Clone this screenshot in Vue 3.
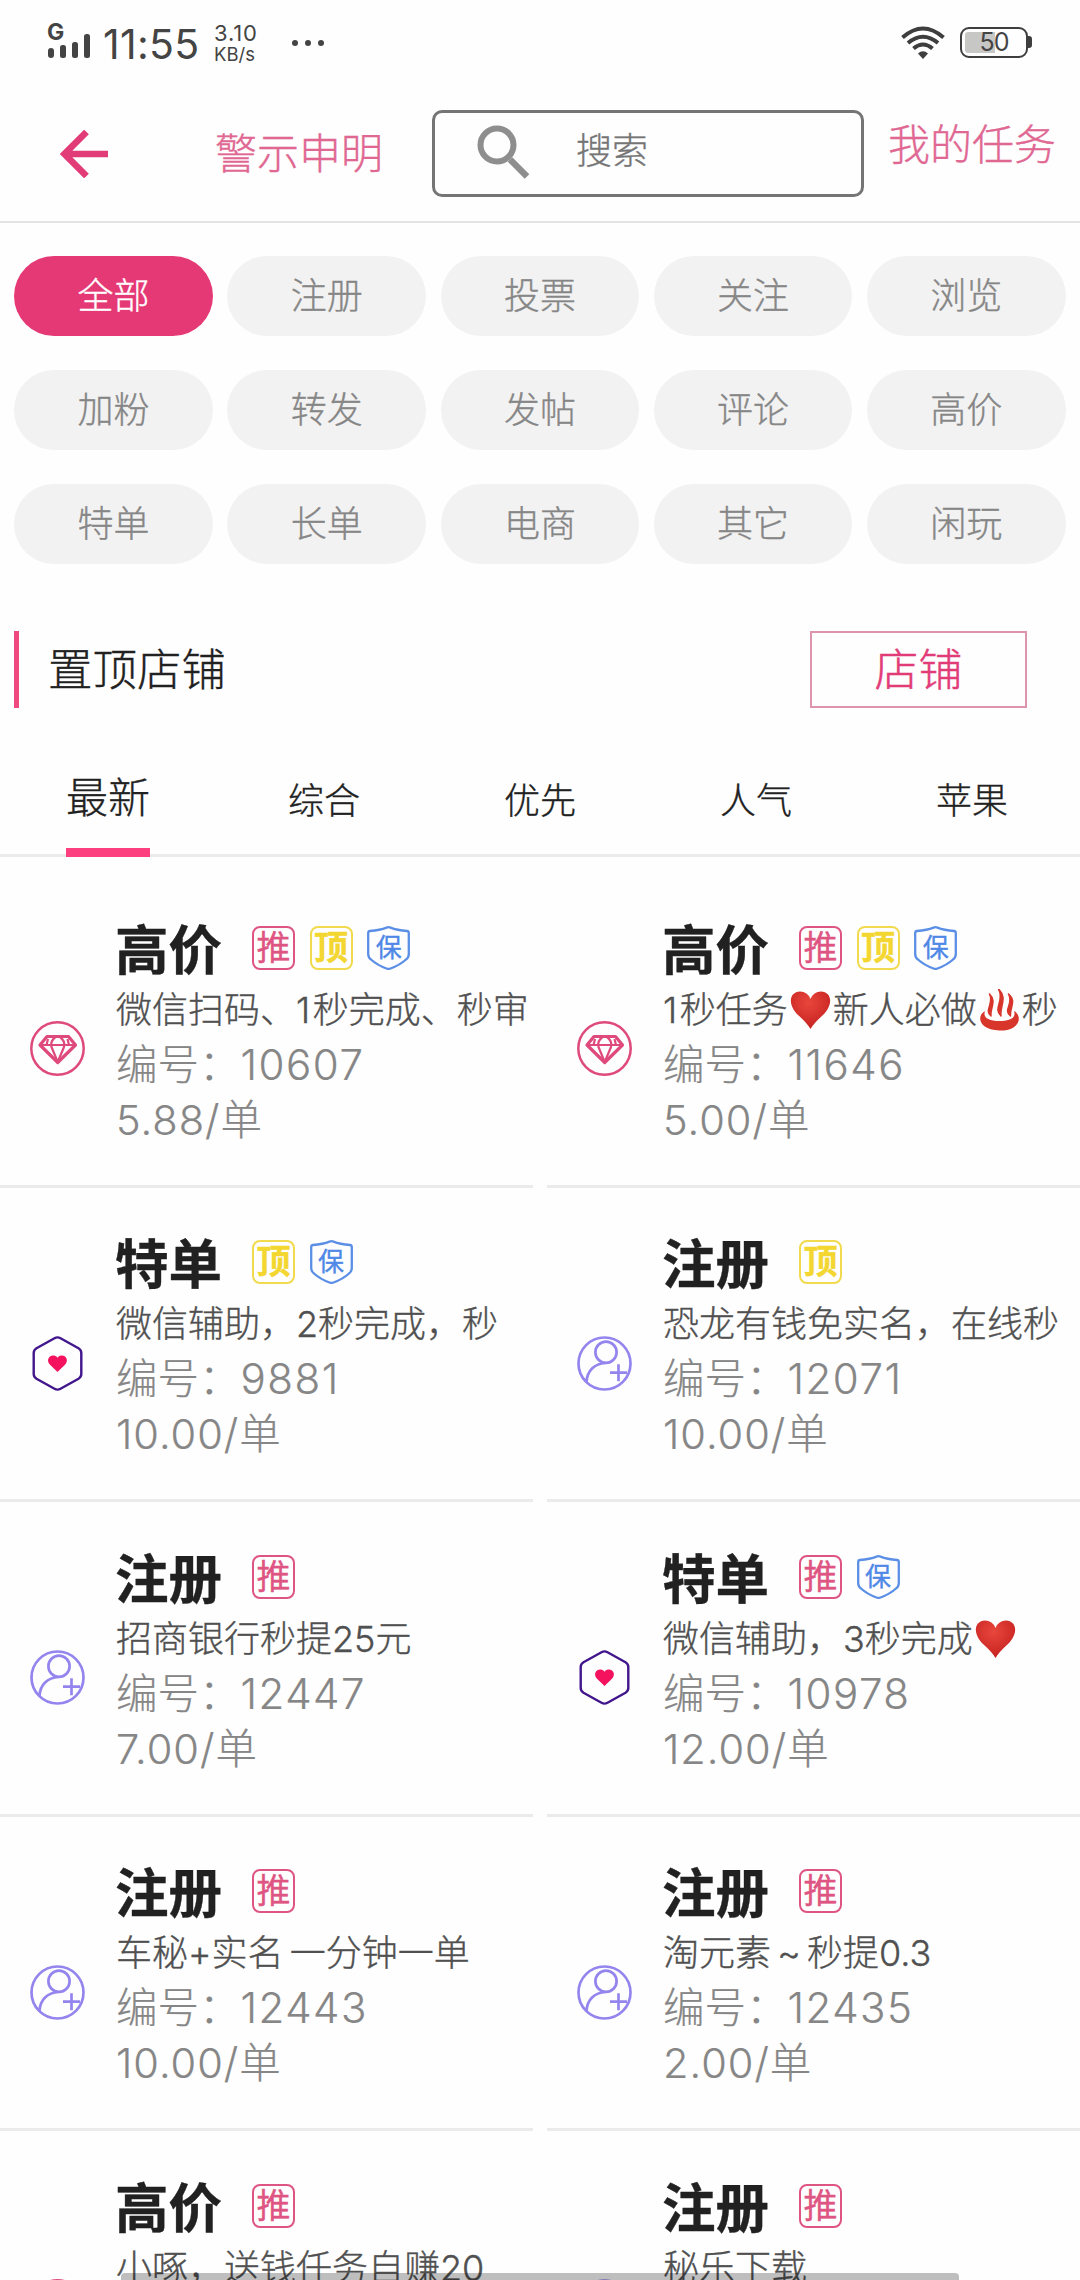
<script setup>
const categories = [
  '全部', '注册', '投票', '关注', '浏览',
  '加粉', '转发', '发帖', '评论', '高价',
  '特单', '长单', '电商', '其它', '闲玩',
]
const tabs = ['最新', '综合', '优先', '人气', '苹果']

const tasks = [
  { icon: 'gem', type: '高价', badges: ['推', '顶', '保'], desc: ['微信扫码、', 'one', '秒完成、秒审'], no: '10607', price: '5.88' },
  { icon: 'gem', type: '高价', badges: ['推', '顶', '保'], desc: ['one', '秒任务', 'heart', '新人必做', 'spring', '秒'], no: '11646', price: '5.00' },
  { icon: 'hex', type: '特单', badges: ['顶', '保'], desc: ['微信辅助，2秒完成，秒'], no: '9881', price: '10.00' },
  { icon: 'user', type: '注册', badges: ['顶'], desc: ['恐龙有钱免实名，在线秒'], no: '12071', price: '10.00' },
  { icon: 'user', type: '注册', badges: ['推'], desc: ['招商银行秒提25元'], no: '12447', price: '7.00' },
  { icon: 'hex', type: '特单', badges: ['推', '保'], desc: ['微信辅助，3秒完成', 'heart'], no: '10978', price: '12.00' },
  { icon: 'user', type: '注册', badges: ['推'], desc: ['车秘+实名 一分钟一单'], no: '12443', price: '10.00' },
  { icon: 'user', type: '注册', badges: ['推'], desc: ['淘元素', 'tilde', '秒提0.3'], no: '12435', price: '2.00' },
  { icon: 'gem', type: '高价', badges: ['推'], desc: ['小啄，送钱任务自赚20'] },
  { icon: 'user', type: '注册', badges: ['推'], desc: ['秘乐下载'] },
]
const badgeClass = { 推: 'push', 顶: 'top', 保: 'safe' }
</script>

<template>
  <div class="screen">
    <div class="status">
      <div class="signal">
        <span class="net">G</span>
        <svg width="42" height="25" viewBox="0 0 42 25" fill="#444">
          <rect x="0" y="15" width="6" height="10" rx="3" />
          <rect x="12" y="12" width="6" height="13" rx="2.5" />
          <rect x="24" y="9" width="6" height="16" rx="2.5" />
          <rect x="36" y="1" width="6" height="24" rx="2.5" />
        </svg>
      </div>
      <span class="clock">11:55</span>
      <div class="speed"><span>3.10</span><span class="unit">KB/s</span></div>
      <div class="dots"><i></i><i></i><i></i></div>
      <svg class="wifi" width="44" height="33" viewBox="0 0 44 33" fill="none" stroke="#3e3e3e" stroke-width="4">
        <path d="M1.500 11.500Q22 -6.500 42.500 11.500" />
        <path d="M7 17Q22 4.500 37 17" />
        <path d="M12.500 22.500Q22 14.500 31.500 22.500" />
        <path d="M17 27.500Q22 23 27 27.500L22 33Z" fill="#3e3e3e" stroke="none" />
      </svg>
      <div class="battery"><span class="charge"></span><span class="level">50</span></div>
      <span class="nub"></span>
    </div>

    <header class="header">
      <svg class="back" width="48" height="48" viewBox="0 0 48 48" fill="none" stroke="#e23c78" stroke-width="6.600">
        <path d="M26.500 2L4.500 24L26.500 46M5 24H48" />
      </svg>
      <a class="link notice">警示申明</a>
      <div class="search">
        <svg width="54" height="54" viewBox="0 0 54 54" fill="none" stroke="#8e8e8e">
          <circle cx="20" cy="20" r="16.500" stroke-width="6" />
          <path d="M33 34.500L50 51.500" stroke-width="6.500" />
        </svg>
        <span>搜索</span>
      </div>
      <a class="link mine">我的任务</a>
    </header>

    <nav class="cats">
      <span v-for="(c, i) in categories" :key="c" class="pill" :class="{ on: i === 0 }">{{ c }}</span>
    </nav>

    <section class="shop">
      <h2>置顶店铺</h2>
      <button class="shop-btn">店铺</button>
    </section>

    <nav class="tabs">
      <span v-for="(t, i) in tabs" :key="t" class="tab" :class="{ on: i === 0 }"><b>{{ t }}</b></span>
    </nav>

    <main class="list">
      <article v-for="(t, n) in tasks" :key="n" class="card">
        <svg v-if="t.icon === 'gem'" class="ico" viewBox="0 0 55 55" fill="none" stroke="#df4a7c" stroke-linejoin="round">
          <circle cx="27.500" cy="27.500" r="26.200" stroke-width="2.500" />
          <path d="M17 15.500H38.500L45.500 24L27.700 41.500L10 24Z" stroke-width="3.200" />
          <path d="M10 24H45.500M25.500 16Q20 20 21.500 26L27.700 41L34 26Q35.500 20 30 16M16.500 24L18 18M39 24L37.500 18" stroke-width="2.200" />
        </svg>
        <svg v-else-if="t.icon === 'hex'" class="ico" viewBox="0 0 55 55">
          <path d="M24.500 2.200Q27.500 .6 30.500 2.200L48.500 12.300Q51.300 14 51.300 17V38Q51.300 41 48.500 42.700L30.500 52.800Q27.500 54.400 24.500 52.800L6.500 42.700Q3.700 41 3.700 38V17Q3.700 14 6.500 12.300Z" fill="none" stroke="#42168c" stroke-width="2.400" />
          <path d="M27.500 36L19.800 28.500C15.500 23.500 20 18 25 19.800Q26.600 20.500 27.500 21.800Q28.400 20.500 30 19.800C35 18 39.500 23.500 35.200 28.500Z" fill="#f4125f" />
        </svg>
        <svg v-else class="ico" viewBox="0 0 55 55" fill="none" stroke="#9485ee" stroke-width="2.700">
          <circle cx="27.500" cy="27.500" r="26" />
          <circle cx="29" cy="16.300" r="10.600" />
          <path d="M9.500 46C10 35 17.500 27.500 28.500 27M33 36.700H50M41.500 28.200V45.200" />
        </svg>
        <div class="body">
          <div class="head">
            <h3>{{ t.type }}</h3>
            <span v-for="b in t.badges" :key="b" class="badge" :class="badgeClass[b]">
              <svg v-if="b === '保'" width="43" height="44" viewBox="0 0 43 44" fill="none" stroke="#5b8fe6" stroke-width="2.300">
                <path d="M1.200 7Q1.200 5.300 3 5Q13 4.200 19.500 1.600Q21.500 .8 23.500 1.600Q30 4.200 40 5Q41.800 5.300 41.800 7V28Q41.800 31.500 39 33.500Q33 39 23.500 42.500Q21.500 43.300 19.500 42.500Q10 39 4 33.500Q1.200 31.500 1.200 28Z" />
              </svg>
              <em>{{ b }}</em>
            </span>
          </div>
          <p class="desc">
            <template v-for="(d, k) in t.desc" :key="k">
              <svg v-if="d === 'heart'" class="emoji" viewBox="0 0 45 42">
                <defs>
                  <radialGradient id="heartFill" cx=".45" cy=".3" r=".75">
                    <stop offset="0" stop-color="#e8473c" />
                    <stop offset="1" stop-color="#c41f1f" />
                  </radialGradient>
                </defs>
                <path d="M22.500 40Q19 34 10 26C-1 15 1.500 3 12 2.500Q19.500 2.500 22.500 10Q25.500 2.500 33 2.500C43.500 3 46 15 35 26Q26 34 22.500 40Z" fill="url(#heartFill)" />
              </svg>
              <svg v-else-if="d === 'spring'" class="emoji" viewBox="0 0 45 42" fill="none" stroke="#d8352b">
                <path d="M8 22C-1 27 2 41 22.500 41.500S46 27 37 22C39.500 29 33 32 22.500 32S5.500 29 8 22Z" fill="#d8352b" stroke="none" />
                <path d="M14 27C6.500 21 17.500 15 12.500 5C20 12 13 19 14 27ZM24 27C15.500 19 28 12 21.500 0C31 9 22.500 17 24 27ZM33.500 27C25.500 21 37 15 31.500 5C40 12 32.500 19 33.500 27Z" fill="#d8352b" stroke-width="1.500" stroke-linejoin="round" />
              </svg>
              <span v-else-if="d === 'tilde'" class="tilde">~</span>
              <span v-else-if="d === 'one'" class="one">1</span>
              <template v-else>{{ d }}</template>
            </template>
          </p>
          <p v-if="t.no" class="no">编号：<span>{{ t.no }}</span></p>
          <p v-if="t.price" class="price">{{ t.price }}/单</p>
        </div>
      </article>
    </main>

    <div class="home-bar"></div>
  </div>
</template>

<style>
body { margin: 0; background: #fefefe; }
</style>

<style scoped>
.screen {
  position: relative;
  width: 1080px;
  height: 2280px;
  overflow: hidden;
  background: #fefefe;
  color: #212121;
  font-family: Inter, "Noto Sans CJK SC", sans-serif;
  font-weight: 300;
  -webkit-text-stroke: .35px currentColor;
}
h2, h3, p { margin: 0; font-weight: 300; }

/* status bar */
.status { display: flex; align-items: flex-start; height: 86px; padding-left: 48px; color: #444; box-sizing: border-box; -webkit-text-stroke: 0; }
.signal { width: 55px; padding-top: 23px; display: flex; flex-direction: column; }
.net { font-size: 23px; font-weight: 700; line-height: 18px; height: 10px; margin-left: -1px; }
.clock { width: 111px; margin-top: 20px; font-size: 41px; line-height: 48px; font-weight: 400; letter-spacing: .3px; }
.speed { width: 78px; padding-top: 21px; display: flex; flex-direction: column; font-size: 22px; line-height: 24px; font-weight: 400; letter-spacing: .8px; }
.speed .unit { font-size: 18.500px; line-height: 18px; letter-spacing: 0; }
.dots { display: flex; gap: 7px; margin-top: 40px; width: 609px; }
.dots i { width: 6px; height: 6px; border-radius: 50%; background: #444; }
.wifi { margin-top: 26px; flex: none; }
.battery { position: relative; flex: none; margin: 27px 0 0 15px; width: 68px; height: 31px; box-sizing: border-box; border: 2px solid #3e3e3e; border-radius: 9px; text-align: center; }
.charge { position: absolute; left: 3px; top: 3px; width: 30px; height: 21px; background: #c7c7c5; border-radius: 3px 0 0 3px; }
.level { position: relative; display: block; font-size: 25px; line-height: 27px; font-weight: 400; letter-spacing: -1px; }
.nub { flex: none; width: 4px; height: 12px; margin-top: 36px; background: #3e3e3e; border-radius: 0 3px 3px 0; }

/* header */
.header { display: flex; align-items: center; height: 137px; box-sizing: border-box; border-bottom: 2px solid #e3e3e3; padding-left: 60px; }
.back { flex: none; }
.link { color: #e06792; font-size: 42px; line-height: 50px; white-space: nowrap; }
.notice { width: 217px; margin-left: 107px; }
.search { flex: none; width: 432px; height: 87px; box-sizing: border-box; border: 3px solid #757575; border-radius: 10px; display: flex; align-items: center; padding-left: 42px; color: #757575; font-size: 36px; }
.search svg { margin-top: -3px; flex: none; }
.search span { margin: -11px 0 0 45px; }
.mine { margin: -17px 0 0 24px; }

/* categories */
.cats { display: grid; grid-template-columns: repeat(5, 198.500px); gap: 34px 14.700px; padding: 33px 0 0 14.300px; }
.pill { height: 80px; line-height: 80px; border-radius: 40px; background: #f2f2f2; color: #868686; font-size: 36px; text-align: center; }
.pill.on { background: #e53976; color: #fff; }

/* pinned shops */
.shop { display: flex; justify-content: space-between; margin: 67px 53px 0 14px; height: 77px; border-left: 5px solid #ef4a80; }
.shop h2 { padding-left: 29px; font-size: 44.500px; line-height: 79px; }
.shop-btn { width: 217px; padding: 1px 0 0; border: 2px solid #dc95ad; background: none; color: #e23c78; font: inherit; font-size: 44px; line-height: 72px; -webkit-text-stroke: .5px currentColor; }

/* tabs */
.tabs { display: grid; grid-template-columns: repeat(5, 1fr); height: 149px; box-sizing: border-box; background: linear-gradient(#ebebeb, #ebebeb) 0 146px / 100% 3px no-repeat; }
.tab { text-align: center; font-size: 36px; padding-top: 71px; }
.tab b { display: inline-block; height: 68px; line-height: 40px; font-weight: 300; }
.tab.on { font-size: 42px; padding-top: 64px; }
.tab.on b { border-bottom: 9px solid #fb3f7f; height: 70px; }

/* task list */
.list { display: grid; grid-template-columns: 533px 533px; column-gap: 14px; grid-auto-rows: 314.600px; margin-top: 16px; }
.card { display: flex; box-sizing: border-box; border-bottom: 3px solid #ebebeb; padding-left: 30px; }
.ico { flex: none; width: 55px; height: 55px; margin-top: 148px; }
.body { margin-left: 31px; padding-top: 47.500px; white-space: nowrap; }
.head { display: flex; align-items: center; height: 60px; }
.head h3 { width: 136px; font-size: 53.500px; line-height: 60px; font-weight: 700; margin-left: -1px; margin-right: 1px; }
.badge { display: grid; place-items: center; width: 43px; height: 44px; margin-right: 14.600px; margin-top: -6px; box-sizing: border-box; }
.badge > * { grid-area: 1 / 1; }
.badge em { font-style: normal; }
.push, .top { border: 2px solid #de5583; border-radius: 8px; color: #de5583; font-size: 34px; line-height: 36px; font-weight: 400; }
.top { border-color: #f1da4e; color: #f3d62f; font-weight: 700; }
.safe { color: #4f88e6; font-size: 26px; line-height: 36px; font-weight: 400; }
.desc { height: 58px; line-height: 58px; font-size: 36px; color: #505050; word-spacing: -4px; }
.no, .price { font-size: 41.500px; color: #868686; -webkit-text-stroke-width: .2px; }
.no { height: 53px; line-height: 52px; }
.no span { font-size: 42px; letter-spacing: 1.500px; }
.price { line-height: 57px; letter-spacing: 1px; }
.emoji { display: inline-block; width: 45px; height: 42px; vertical-align: -8px; }
.tilde { display: inline-block; width: 36px; text-align: center; }
.one { margin-right: 2.500px; }

.home-bar { position: absolute; left: 121px; bottom: 0; width: 838px; height: 7px; border-radius: 4px 4px 0 0; background: rgba(0, 0, 0, .25); }
</style>
